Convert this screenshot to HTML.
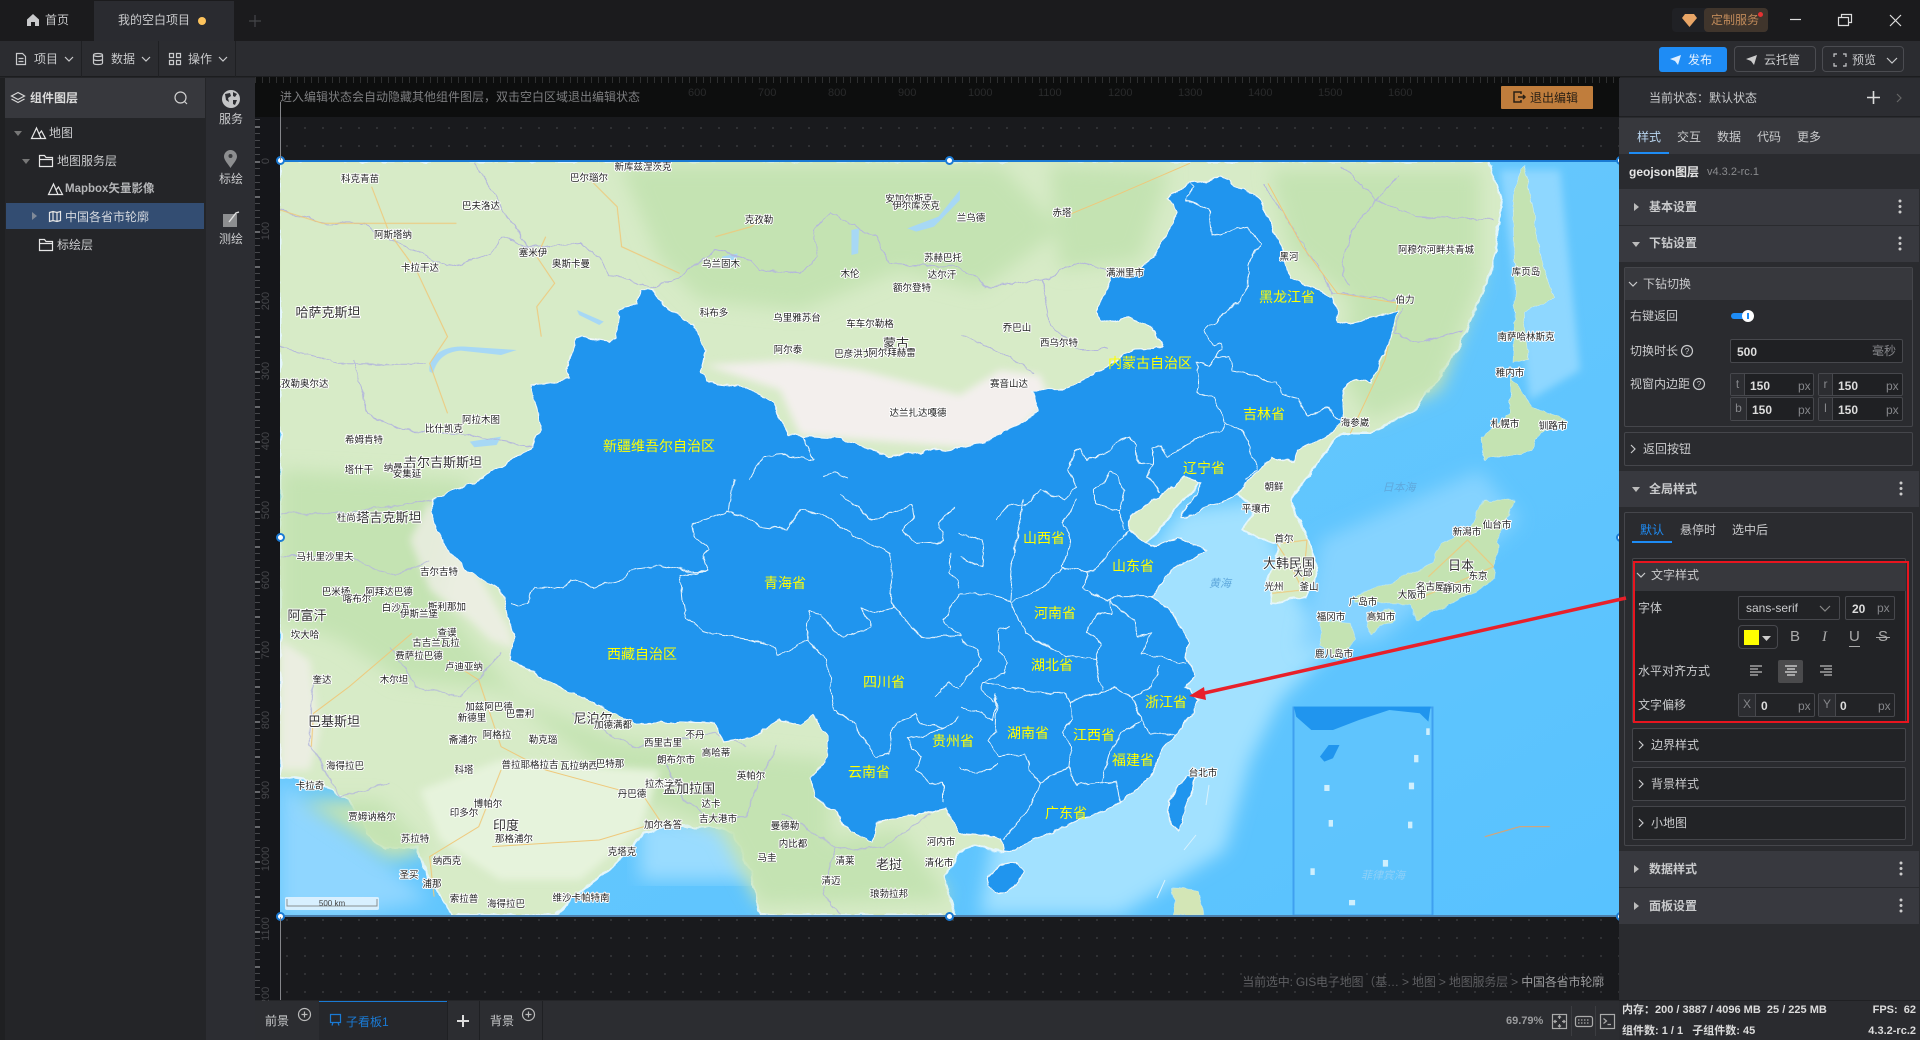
<!DOCTYPE html>
<html lang="zh"><head><meta charset="utf-8"><title>我的空白项目</title>
<style>
*{box-sizing:border-box}
html,body{margin:0;padding:0;width:1920px;height:1040px;overflow:hidden;background:#242528}
body{font:12px/16px "Liberation Sans","Noto Sans CJK SC",sans-serif;color:#c9cacc;position:relative}
.a{position:absolute}
.t{position:absolute;white-space:nowrap;height:16px;line-height:16px}
.b{font-weight:700}
.sec{position:absolute;left:1619px;width:300px;background:#38393f}
.box{position:absolute;border:1px solid #45464b;border-radius:2px}
.inp{position:absolute;background:#1f2023;border:1px solid #47484d;border-radius:2px}
.lbl{position:absolute;left:0;top:0;bottom:0;border-right:1px solid #47484d;background:#2c2d31;color:#85868a;text-align:center;line-height:21px}
.px{color:#85868a}
.m text{font-family:"Liberation Sans","Noto Sans CJK SC",sans-serif;font-size:9.5px;fill:#222;stroke:#fff;stroke-width:2px;paint-order:stroke;stroke-linejoin:round;text-anchor:middle}
.m text.l{font-size:13px;fill:#333}
.m text.w{fill:#5fa8dc;stroke:none;font-size:11px;font-style:italic}
.p polyline{fill:none;stroke:#e9f5fd;stroke-width:1;vector-effect:non-scaling-stroke;stroke-linejoin:round}
.c polyline{fill:none;stroke:#b4b7dc;stroke-width:1;vector-effect:non-scaling-stroke}
.r polyline{fill:none;stroke:#efc87a;stroke-width:1;vector-effect:non-scaling-stroke}
.y text{font-family:"Liberation Sans","Noto Sans CJK SC",sans-serif;font-size:14px;fill:#ffff00;text-anchor:middle;dominant-baseline:central}
.ic{position:absolute;overflow:visible;fill:none;stroke:#c9cacc;stroke-width:1.2}
.h{position:absolute;width:9px;height:9px;border-radius:50%;background:#fff;border:2px solid #1a7ad4}
.rn{position:absolute;color:#2a2b2c;font-size:11px;line-height:12px}
.ry{position:absolute;color:#45464a;font-size:11px;line-height:12px;transform:rotate(-90deg);transform-origin:center;width:30px;text-align:center;left:251px}
</style></head><body>

<!-- top bar -->
<div class="a" style="left:0;top:0;width:1920px;height:41px;background:#1b1b1d"></div>
<div class="a" style="left:94px;top:1px;width:140px;height:40px;background:#2a2b30"></div>
<svg class="ic" style="left:26px;top:13px" width="14" height="14" viewBox="0 0 14 14"><path d="M7 1L1 6.5V13H5V9H9V13H13V6.5Z" fill="#c9cacc" stroke="none"/></svg>
<span class="t" style="left:45px;top:12px">首页</span>
<span class="t" style="left:118px;top:12px">我的空白项目</span>
<div class="a" style="left:198px;top:17px;width:8px;height:8px;border-radius:50%;background:#fdc35c"></div>
<svg class="ic" style="left:249px;top:15px;stroke:#45464a" width="12" height="12"><path d="M6 0V12M0 6H12"/></svg>
<div class="a" style="left:1672px;top:8px;width:96px;height:24px;border-radius:4px;background:#202125"></div>
<div class="a" style="left:1704px;top:8px;width:64px;height:24px;border-radius:4px;background:#40352c"></div>
<svg class="ic" style="left:1682px;top:14px" width="15" height="13" viewBox="0 0 15 13"><path d="M3 0H12L15 4L7.5 13L0 4Z" fill="#e8a566" stroke="none"/></svg>
<span class="t" style="left:1711px;top:12px;color:#c08a5a">定制服务</span>
<div class="a" style="left:1758px;top:12px;width:5px;height:5px;border-radius:50%;background:#e53232"></div>
<svg class="ic" style="left:1790px;top:19px;stroke:#ddd" width="11" height="2"><path d="M0 .5H11"/></svg>
<svg class="ic" style="left:1838px;top:14px;stroke:#ddd" width="14" height="12"><path d="M.5 3.5H10.5V11.5H.5ZM3.5 3.5V.5H13.5V8.5H10.5"/></svg>
<svg class="ic" style="left:1890px;top:15px;stroke:#ddd" width="11" height="11"><path d="M0 0L11 11M11 0L0 11"/></svg>

<!-- toolbar -->
<div class="a" style="left:0;top:41px;width:1920px;height:36px;background:#2b2c30;border-bottom:1px solid #1c1d1f"></div>
<div class="a" style="left:81px;top:41px;width:1px;height:36px;background:#1f2023"></div>
<div class="a" style="left:158px;top:41px;width:1px;height:36px;background:#1f2023"></div>
<div class="a" style="left:235px;top:41px;width:1px;height:36px;background:#1f2023"></div>
<svg class="ic" style="left:16px;top:53px" width="10" height="12"><path d="M.5.5H6.5L9.5 3.5V11.5H.5ZM2.5 5.5H7.5M2.5 8.5H7.5"/></svg>
<span class="t" style="left:34px;top:51px">项目</span>
<svg class="ic" style="left:65px;top:57px" width="8" height="5"><path d="M0 0L4 4L8 0"/></svg>
<svg class="ic" style="left:93px;top:53px" width="10" height="12"><ellipse cx="5" cy="2" rx="4.5" ry="1.5"/><path d="M.5 2V10C.5 12 9.5 12 9.5 10V2M.5 6C.5 8 9.5 8 9.5 6"/></svg>
<span class="t" style="left:111px;top:51px">数据</span>
<svg class="ic" style="left:142px;top:57px" width="8" height="5"><path d="M0 0L4 4L8 0"/></svg>
<svg class="ic" style="left:169px;top:53px" width="12" height="12"><path d="M.5.5H4.5V4.5H.5ZM7.5.5H11.5V4.5H7.5ZM.5 7.5H4.5V11.5H.5ZM7.5 7.5H11.5V11.5H7.5Z"/></svg>
<span class="t" style="left:188px;top:51px">操作</span>
<svg class="ic" style="left:219px;top:57px" width="8" height="5"><path d="M0 0L4 4L8 0"/></svg>
<div class="a" style="left:1659px;top:47px;width:68px;height:25px;background:#1e8cf5;border-radius:3px"></div>
<svg class="ic" style="left:1670px;top:55px" width="11" height="10"><path d="M0 4L11 0L8 10L5 6Z" fill="#ddeeff" stroke="none"/></svg>
<span class="t" style="left:1688px;top:52px;color:#e4f1ff">发布</span>
<div class="a" style="left:1734px;top:46px;width:82px;height:26px;border:1px solid #4b4c51;border-radius:4px"></div>
<svg class="ic" style="left:1746px;top:55px" width="11" height="10"><path d="M0 4L11 0L8 10L5 6Z" fill="#ccc" stroke="none"/></svg>
<span class="t" style="left:1764px;top:52px">云托管</span>
<div class="a" style="left:1822px;top:46px;width:82px;height:26px;border:1px solid #4b4c51;border-radius:4px"></div>
<svg class="ic" style="left:1834px;top:54px" width="12" height="12"><path d="M0 3V0H3M9 0H12V3M12 9V12H9M3 12H0V9"/></svg>
<span class="t" style="left:1852px;top:52px">预览</span>
<svg class="ic" style="left:1887px;top:58px" width="10" height="6"><path d="M0 0L5 5L10 0"/></svg>

<!-- left panel -->
<div class="a" style="left:0;top:78px;width:206px;height:962px;background:#242528"></div>
<div class="a" style="left:0;top:78px;width:5px;height:962px;background:#1f2022"></div>
<div class="a" style="left:5px;top:78px;width:200px;height:40px;background:#37383d"></div>
<svg class="ic" style="left:11px;top:92px;stroke:#d8d8d8" width="14" height="12"><path d="M7 .5L13.5 4L7 7.5L.5 4ZM.5 7L7 10.5L13.5 7"/></svg>
<span class="t b" style="left:30px;top:90px;color:#dcdcdc">组件图层</span>
<svg class="ic" style="left:174px;top:91px;stroke:#d0d0d0" width="14" height="14"><circle cx="6.5" cy="6.5" r="5.5"/><path d="M10.5 10.5L13 13"/></svg>
<svg class="ic" style="left:14px;top:131px" width="8" height="5"><path d="M0 0H8L4 5Z" fill="#777" stroke="none"/></svg>
<svg class="ic" style="left:31px;top:127px;stroke:#e6e6e6" width="15" height="12"><path d="M.5 11.5L5.5 1L10 11.5ZM8 7L10.5 4L14.5 11.5H10"/></svg>
<span class="t" style="left:49px;top:125px">地图</span>
<svg class="ic" style="left:22px;top:159px" width="8" height="5"><path d="M0 0H8L4 5Z" fill="#777" stroke="none"/></svg>
<svg class="ic" style="left:39px;top:155px;stroke:#e6e6e6" width="14" height="12"><path d="M.5 11.5V.5H5.5L7 2.5H13.5V11.5ZM.5 4.5H13.5"/></svg>
<span class="t" style="left:57px;top:153px">地图服务层</span>
<svg class="ic" style="left:48px;top:183px;stroke:#e6e6e6" width="15" height="12"><path d="M.5 11.5L5.5 1L10 11.5ZM8 7L10.5 4L14.5 11.5H10"/></svg>
<span class="t b" style="left:65px;top:181px;font-size:11.5px;color:#b5b6b8">Mapbox矢量影像</span>
<div class="a" style="left:6px;top:203px;width:198px;height:26px;background:#334d72"></div>
<svg class="ic" style="left:32px;top:212px" width="5" height="8"><path d="M0 0V8L5 4Z" fill="#808a99" stroke="none"/></svg>
<svg class="ic" style="left:49px;top:211px;stroke:#e6e6e6" width="12" height="11"><path d="M.5 1.5L4 .5L8 1.5L11.5 .5V9.5L8 10.5L4 9.5L.5 10.5ZM4 .5V9.5M8 1.5V10.5"/></svg>
<span class="t" style="left:65px;top:209px;color:#d4d8de">中国各省市轮廓</span>
<svg class="ic" style="left:39px;top:239px;stroke:#e6e6e6" width="14" height="12"><path d="M.5 11.5V.5H5.5L7 2.5H13.5V11.5ZM.5 4.5H13.5"/></svg>
<span class="t" style="left:57px;top:237px">标绘层</span>

<!-- tool strip -->
<div class="a" style="left:206px;top:78px;width:49px;height:922px;background:#2c2d32"></div>
<div class="a" style="left:206px;top:1000px;width:49px;height:40px;background:#2c2d32"></div>
<svg class="ic" style="left:222px;top:90px" width="18" height="18" viewBox="0 0 18 18"><circle cx="9" cy="9" r="9" fill="#c4c5c7" stroke="none"/><path d="M3 4L8 3L9 6L6 8L7 12L4 10ZM11 2L15 4L13 7L11 6ZM11 10L15 10L13 15L11 14Z" fill="#2c2d32" stroke="none"/></svg>
<span class="t" style="left:219px;top:111px">服务</span>
<svg class="ic" style="left:224px;top:150px" width="13" height="18" viewBox="0 0 13 18"><path d="M6.5 0C3 0 0 3 0 6.5C0 10 4 14 6.5 18C9 14 13 10 13 6.5C13 3 10 0 6.5 0Z" fill="#8d8e90" stroke="none"/><circle cx="6.5" cy="6" r="2" fill="#3a3b3e" stroke="none"/></svg>
<span class="t" style="left:219px;top:171px">标绘</span>
<svg class="ic" style="left:223px;top:211px" width="17" height="17" viewBox="0 0 17 17"><rect x="0" y="3" width="14" height="13" fill="#8d8e90" stroke="none"/><path d="M6 11L13 2L16 1" stroke="#e0e0e0" stroke-width="1.4"/></svg>
<span class="t" style="left:219px;top:231px">测绘</span>

<!-- canvas -->
<div class="a" style="left:255px;top:77px;width:1365px;height:923px;background-color:#191a1d;background-image:radial-gradient(circle at 9px 9px,#36373a 0.8px,transparent 1.1px);background-size:18px 18px;background-position:275px 6px"></div>
<div class="a" style="left:255px;top:77px;width:25px;height:923px;background-color:#15161a;background-image:repeating-linear-gradient(to bottom,#47484c 0,#47484c 1px,transparent 1px,transparent 7px)"></div>
<div class="a" style="left:255px;top:77px;width:5px;height:923px;background:repeating-linear-gradient(to bottom,#66676b 0,#66676b 2px,transparent 2px,transparent 35px);background-position:0 14px"></div>
<div class="a" style="left:260px;top:77px;width:20px;height:923px;background:#15161a"></div>
<div class="ry" style="top:155px">0</div><div class="ry" style="top:225px">100</div><div class="ry" style="top:295px">200</div><div class="ry" style="top:365px">300</div><div class="ry" style="top:435px">400</div><div class="ry" style="top:504px">500</div><div class="ry" style="top:574px">600</div><div class="ry" style="top:644px">700</div><div class="ry" style="top:714px">800</div><div class="ry" style="top:784px">900</div><div class="ry" style="top:853px">1000</div><div class="ry" style="top:923px">1100</div><div class="ry" style="top:993px">1200</div>

<!-- MAP -->
<svg class="a" style="left:280px;top:161px" width="1340" height="755" viewBox="280 161 1340 755">
<defs>
<linearGradient id="oc" x1="0" y1="0" x2="1" y2="1"><stop offset="0" stop-color="#6fcbfb"/><stop offset="1" stop-color="#58c2ff"/></linearGradient>
<filter id="bl"><feGaussianBlur stdDeviation="9"/></filter>
<filter id="bl2"><feGaussianBlur stdDeviation="4"/></filter>
<filter id="rough" filterUnits="userSpaceOnUse" x="280" y="161" width="1340" height="755" color-interpolation-filters="sRGB"><feTurbulence type="fractalNoise" baseFrequency="0.07" numOctaves="3" seed="4" result="n"/><feDisplacementMap in="SourceGraphic" in2="n" scale="7" xChannelSelector="R" yChannelSelector="G"/></filter>
</defs>
<rect x="280" y="161" width="1340" height="755" fill="url(#oc)"/>
<!-- shelves -->
<polygon filter="url(#bl)" fill="#a2e1ff" points="1180,510 1260,500 1300,600 1340,640 1280,700 1250,760 1225,850 1120,915 980,915 1000,800 1120,600"/>
<polygon filter="url(#bl)" fill="#9adcff" points="640,820 770,820 770,880 640,880"/>
<polygon filter="url(#bl)" fill="#8fd6ff" points="280,780 370,850 430,900 360,915 280,915"/>
<polygon filter="url(#bl)" fill="#85d3ff" points="1320,540 1480,470 1520,520 1380,640 1300,650"/>
<polygon filter="url(#bl2)" fill="#8ed7ff" points="1500,170 1560,170 1580,370 1530,400"/>
<!-- land -->
<g filter="url(#rough)">
<polygon fill="#d7ebc7" stroke="#e3f6fc" stroke-width="2" points="280,161 1487,161 1502,200 1493,267 1459,347 1415,410 1372,433 1344,433 1337,437 1290,500 1303,530 1318,567 1307,597 1272,603 1268,580 1281,543 1272,543 1242,530 1255,510 1237,493 1200,480 1100,600 1100,750 1050,830 1003,853 975,845 960,850 945,875 955,915 760,915 751,873 733,833 715,827 662,827 644,833 617,863 572,897 555,915 452,915 430,880 416,847 385,850 367,833 349,800 318,783 280,777"/>
</g>
<!-- greener zones -->
<g filter="url(#bl)" fill="#c4e3b2">
<polygon points="620,165 1000,165 1060,230 980,290 900,270 800,310 700,300 660,260"/>
<polygon points="1270,170 1480,170 1480,280 1440,390 1370,420 1345,380 1350,300 1290,250"/>
<polygon points="1050,165 1170,170 1140,260 1060,270"/>
<polygon points="280,470 470,480 440,600 520,700 620,740 720,750 830,760 830,840 900,830 950,900 760,905 720,830 640,800 500,690 400,680 340,640 280,620"/>
<polygon points="300,800 380,800 430,850 390,860"/>
</g>
<g filter="url(#bl2)" fill="#f3efed">
<polygon points="705,365 780,390 800,435 1000,450 1050,400 1040,375 1000,370 960,395 860,370 790,360"/>
<polygon opacity=".7" points="430,500 470,560 510,630 515,650 490,640 470,620 430,590 410,540"/>
<polygon opacity=".7" points="280,640 310,660 320,730 310,770 280,770"/>
</g>
<g filter="url(#bl2)" fill="#e6f3dc">
<polygon points="500,760 660,770 640,830 580,880 500,880 440,840 420,790"/>
</g>
<!-- islands -->
<g fill="#c4e3b2" stroke="#dff4fb" stroke-width="1" filter="url(#rough)">
<g transform="translate(960,100) scale(.4337,.3333)">
<polygon points="1300,190 1340,480 1370,590 1300,640 1310,780 1275,790 1280,600 1275,300"/>
<polygon points="1270,830 1320,920 1400,960 1340,1000 1320,1050 1210,1080 1200,1010 1270,940"/>
</g>
<g transform="translate(960,500) scale(.4337,.3333)">
<polygon points="1210,0 1280,0 1240,120 1230,240 1195,270 1050,360 1040,310 910,310 910,290 1010,240 1090,190 1110,130 1170,90"/>
<polygon points="830,360 900,370 910,420 870,480 830,440"/>
<polygon points="940,345 1000,330 1000,360 945,400"/>
<polygon fill="#d3e6b6" points="490,1165 550,1170 560,1245 495,1245"/>
</g>
</g>
<!-- korea roads / japan -->
<g class="r" transform="translate(960,500) scale(.4337,.3333)">
<polyline points="730,130 760,190 790,270"/><polyline points="740,130 800,120 790,270 720,280"/><polyline points="1080,230 1170,120 1230,200 1050,300"/>
<polyline points="1210,1010 1290,980 1360,980" style="stroke:#e9a060"/>
</g>
<!-- water -->
<g fill="#a7d8f5">
<g transform="translate(260,80) scale(.4464,.3333)">
<path d="M380 875C375 830 410 795 460 800L575 810L540 825L450 812C415 815 395 840 388 880Z"/>
<polygon points="470,1085 540,1070 530,1095 480,1102"/>
<polygon points="1450,445 1520,410 1568,330 1568,360 1510,440 1470,455"/>
<polygon points="1325,450 1342,445 1340,520 1325,525"/>
<polygon points="710,690 770,725 760,735 715,705"/>
<polygon points="1035,530 1070,520 1065,550 1040,550"/>
</g>
</g>
<!-- country borders -->
<g filter="url(#rough)">
<g class="c" transform="translate(260,80) scale(.4464,.3333)">
<polyline points="45,390 140,430 230,430 280,470 330,500 420,560 520,520 540,470 600,500 650,500 720,490 760,530 780,590 830,600 880,625"/>
<polyline points="880,625 940,590 1020,510 1100,540 1120,570 1210,580 1250,530 1240,450 1280,400 1380,470 1410,550 1568,560"/>
<polyline points="480,250 600,500"/>
<polyline points="45,800 180,850 370,850"/>
<polyline points="210,840 240,1000 320,1050 450,1060 610,1100"/>
</g>
<g class="c" transform="translate(260,480) scale(.4464,.3333)">
<polyline points="45,100 200,100 385,60"/><polyline points="45,230 200,230 300,290 380,240"/>
<polyline points="120,600 110,790 180,950 290,910"/><polyline points="290,500 350,620 450,650 540,520"/>
<polyline points="700,700 840,800 1020,760 1090,800"/><polyline points="900,830 950,960 1010,1010"/><polyline points="1000,1010 1090,1010 1120,900 1160,800"/>
<polyline points="1170,1000 1300,1110 1400,1100 1500,1000"/><polyline points="1290,1100 1260,1240 1300,1300"/>
</g>
<g class="c" transform="translate(960,100) scale(.4337,.3333)">
<polyline points="0,500 60,560 190,540 270,490 345,510"/><polyline points="190,540 210,680 280,750 340,750"/>
<polyline points="0,700 100,760 170,820"/><polyline points="700,250 790,430 860,580 1000,600"/>
<polyline points="1020,620 1000,700 1060,730 1160,690"/><polyline points="880,200 960,300 900,400 880,500 900,560"/><polyline points="1010,230 960,300 1050,350 1230,360"/>
</g>
</g>
<g class="r" transform="translate(260,80) scale(.4464,.3333)">
<polyline points="250,320 290,460 350,570 420,770 380,850 420,1000" /><polyline points="45,390 140,430 280,430 440,430"/><polyline points="640,470 620,530 660,610 620,680 630,770"/><polyline points="1020,470 1100,440 1120,420"/><polyline points="740,300 800,380 810,500 940,580"/>
</g>
<g class="r" transform="translate(260,480) scale(.4464,.3333)">
<polyline points="115,800 120,700 200,620 340,460"/><polyline points="420,540 490,600 510,680 540,800 640,870 860,950 900,1030"/><polyline points="540,870 490,1040 380,1130 390,1250"/><polyline points="520,1100 760,1080 860,1040"/>
</g>
<g class="r" transform="translate(960,100) scale(.4337,.3333)">
<polyline points="240,350 370,280 530,190"/><polyline points="710,250 790,440 870,580 1010,610 980,780 900,1000"/>
</g>

<!-- China -->
<g filter="url(#rough)">
<g fill="#2095ee" stroke="#eef7fb" stroke-width="1.2" stroke-linejoin="round">
<polygon points="639,290 653,290 664,307 693,323 706,350 700,373 706,382 747,388 773,403 789,435 840,438 889,457 960,447 986,442 1038,412 1032,390 1064,390 1107,367 1133,348 1164,347 1151,327 1131,317 1099,322 1097,313 1112,270 1129,278 1155,257 1177,213 1168,198 1190,183 1220,178 1259,197 1281,247 1290,277 1333,297 1339,320 1350,323 1376,317 1398,310 1389,343 1372,383 1355,378 1342,390 1344,420 1333,432 1320,440 1298,450 1294,462 1272,457 1233,497 1185,517 1181,517 1201,483 1185,475 1160,497 1129,517 1129,530 1151,547 1177,538 1207,550 1172,570 1164,577 1153,597 1172,613 1190,643 1185,657 1194,677 1185,687 1199,700 1190,717 1164,747 1151,777 1120,802 1090,817 1047,833 1014,850 1003,853 1001,838 960,833 945,808 916,815 876,823 872,842 849,833 836,813 814,795 811,777 827,757 827,737 813,715 800,725 778,720 751,737 724,742 715,723 680,722 635,725 595,703 546,680 510,660 514,637 499,587 470,573 447,550 432,520 432,500 474,482 479,478 532,447 541,427 532,385 570,380 566,370 577,337 608,342 617,337 619,310 637,303"/>
<polygon points="986,877 1000,866 1016,862 1023,870 1018,882 1008,892 995,892 988,887"/>
<polygon points="1190,775 1196,777 1193,790 1185,807 1180,830 1172,825 1168,813 1170,800 1178,785"/>
</g>
<!-- province borders -->
<g class="p" transform="translate(260,80) scale(.4464,.3333)">
<polyline points="1215,1065 1240,1140 1175,1125 1130,1130 1095,1195"/><polyline points="1265,1190 1285,1180 1320,1195"/>
</g>
<g class="p" transform="translate(260,480) scale(.4464,.3333)">
<polyline points="565,375 600,370 615,320 680,325 695,300 750,320 820,295 830,270 900,255 960,275 1000,275 990,230 1005,210 975,170 965,135 1045,95 1090,110 1120,140 1180,150 1210,90 1270,110 1330,170 1410,220 1420,280 1410,340 1420,380 1480,470 1568,470"/>
<polyline points="1060,0 1050,95"/><polyline points="1000,275 940,285 950,400 990,450 1050,470 1100,480 1150,500 1160,525 1225,480"/>
<polyline points="1300,45 1340,80 1370,120 1460,75 1465,110 1440,150 1470,190 1530,185 1520,130 1560,80"/>
<polyline points="1230,395 1225,480 1270,540 1285,670 1290,690 1330,730 1380,830 1410,820 1420,740 1470,700 1480,730 1530,745 1568,710"/>
<polyline points="1230,395 1260,400 1280,450 1310,470 1370,440 1345,380 1380,400 1420,380"/>
<polyline points="1445,780 1480,830 1470,870 1500,910 1530,910 1530,970"/><polyline points="1445,780 1500,760 1530,745"/>
<polyline points="1510,650 1540,610 1568,630"/><polyline points="1550,220 1545,280 1568,320"/>
<polyline points="1568,340 1530,420 1568,470"/>
</g>
<g class="p" transform="translate(960,100) scale(.4337,.3333)">
<polyline points="530,250 540,265 520,300 575,330 580,400 600,405 660,380 695,430 665,500 665,560 640,610 630,615 565,690 585,740 600,730 605,745 590,770 620,770 625,810 680,825 730,850 740,880 780,895 800,950 850,925 860,945 885,960"/>
<polyline points="590,770 570,800 540,790 550,820 550,880 590,895 605,960 610,965 650,990 670,1050 685,1110 660,1140"/>
<polyline points="610,965 600,995 540,1020 480,1070 470,1040 445,1040 445,1095 410,1090 405,1040 390,1015 360,1030 340,1060 290,1080 280,1045 265,1055 250,1110 270,1160 240,1200 185,1170 150,1220 110,1215 85,1260"/>
<polyline points="445,1095 430,1130 465,1175"/><polyline points="350,1115 310,1175 310,1210 370,1230 380,1170 350,1115"/><polyline points="370,1230 380,1290"/>
</g>
<g class="p" transform="translate(960,500) scale(.4337,.3333)">
<polyline points="150,0 130,100 120,210 115,300 150,400 190,430 245,465 310,480"/><polyline points="270,0 240,70 255,130 235,200 290,215 310,210 390,90"/>
<polyline points="120,305 190,265 240,200"/><polyline points="290,215 285,265 340,300 360,290 445,290"/>
<polyline points="345,300 350,345 315,340 290,400 325,430 310,480 330,570"/><polyline points="345,300 400,360 410,410 440,400 420,460 520,490"/>
<polyline points="0,95 50,120 55,200 0,170"/><polyline points="0,280 60,280 115,300"/><polyline points="115,380 90,385 90,450 110,490 100,520 50,545 50,570 80,610"/>
<polyline points="0,420 40,450 50,480 0,560"/>
<polyline points="50,545 125,565 210,580 240,580 255,605 335,575 355,560 400,595"/>
<polyline points="460,500 440,560 400,595 420,660 440,700 495,700"/><polyline points="420,660 370,700 345,760 325,845 270,855 250,800 210,830 185,850"/>
<polyline points="255,605 260,660 240,700 255,740 250,800"/><polyline points="85,585 80,700 65,720 90,770 150,760 160,810 185,850 160,920 120,990 100,1015"/>
<polyline points="325,845 360,850 370,905"/><polyline points="85,790 40,825 0,800"/><polyline points="0,620 50,640 75,660 85,590"/>
</g>
</g>
<!-- labels -->
<g class="m">
<text x="360" y="182">科克青苗</text><text x="481" y="209">巴夫洛达</text><text x="589" y="181">巴尔瑙尔</text><text x="643" y="170">新库兹涅茨克</text><text x="759" y="223">克孜勒</text><text x="909" y="202">安加尔斯克</text><text x="916" y="209">伊尔库茨克</text><text x="393" y="238">阿斯塔纳</text><text x="420" y="271">卡拉干达</text><text x="533" y="256">塞米伊</text><text x="571" y="267">奥斯卡曼</text><text x="721" y="267">乌兰固木</text><text x="943" y="261">苏赫巴托</text><text x="942" y="278">达尔汗</text><text x="850" y="277">木伦</text><text x="912" y="291">额尔登特</text><text class="l" x="328" y="317">哈萨克斯坦</text><text x="714" y="316">科布多</text><text x="797" y="321">乌里雅苏台</text><text x="870" y="327">车车尔勒格</text><text x="788" y="353">阿尔泰</text><text x="858" y="357">巴彦洪戈尔</text><text class="l" x="896" y="348">蒙古</text><text x="892" y="356">阿尔拜赫雷</text><text x="918" y="416">达兰扎达嘎德</text><text x="300" y="387">克孜勒奥尔达</text><text x="481" y="423">阿拉木图</text><text x="444" y="432">比什凯克</text><text class="l" x="443" y="467">吉尔吉斯斯坦</text><text x="364" y="443">希姆肯特</text><text x="359" y="473">塔什干</text><text x="398" y="471">纳曼干</text><text x="407" y="477">安集延</text>
<text x="351" y="521">杜尚别</text><text class="l" x="389" y="522">塔吉克斯坦</text><text x="325" y="560">马扎里沙里夫</text><text x="439" y="575">吉尔吉特</text><text x="336" y="595">巴米扬</text><text x="389" y="595">阿拜达巴德</text><text x="357" y="602">喀布尔</text><text x="396" y="611">白沙瓦</text><text x="447" y="610">斯利那加</text><text x="419" y="617">伊斯兰堡</text><text class="l" x="307" y="620">阿富汗</text><text x="305" y="638">坎大哈</text><text x="447" y="636">查谟</text><text x="436" y="646">古吉兰瓦拉</text><text x="419" y="659">费萨拉巴德</text><text x="464" y="670">卢迪亚纳</text><text x="394" y="683">木尔坦</text><text x="322" y="683">奎达</text><text class="l" x="334" y="726">巴基斯坦</text><text x="489" y="710">加兹阿巴德</text><text x="472" y="721">新德里</text><text x="520" y="717">巴雷利</text><text class="l" x="593" y="723">尼泊尔</text><text x="613" y="728">加德满都</text><text x="695" y="738">不丹</text><text x="463" y="743">斋浦尔</text><text x="497" y="738">阿格拉</text><text x="543" y="743">勒克瑙</text><text x="663" y="746">西里古里</text><text x="716" y="756">高哈蒂</text><text x="676" y="763">朗布尔市</text><text x="464" y="773">科塔</text><text x="345" y="769">海得拉巴</text><text x="530" y="768">普拉耶格拉吉</text><text x="579" y="769">瓦拉纳西</text><text x="610" y="767">巴特那</text><text x="310" y="789">卡拉奇</text><text x="664" y="787">拉杰沙希</text><text class="l" x="689" y="793">孟加拉国</text><text x="632" y="797">丹巴德</text><text x="711" y="807">达卡</text><text x="751" y="779">英帕尔</text><text x="464" y="816">印多尔</text><text x="488" y="807">博帕尔</text><text x="372" y="820">贾姆讷格尔</text><text class="l" x="506" y="830">印度</text><text x="663" y="828">加尔各答</text><text x="718" y="822">吉大港市</text><text x="785" y="829">曼德勒</text><text x="514" y="842">那格浦尔</text><text x="415" y="842">苏拉特</text><text x="793" y="847">内比都</text><text class="l" x="889" y="869">老挝</text><text x="941" y="845">河内市</text><text x="939" y="866">清化市</text><text x="767" y="861">马圭</text><text x="831" y="884">清迈</text><text x="889" y="897">琅勃拉邦</text><text x="447" y="864">纳西克</text><text x="409" y="878">圣买</text><text x="432" y="887">浦那</text><text x="464" y="902">索拉普</text><text x="506" y="907">海得拉巴</text><text x="581" y="901">维沙卡帕特南</text><text x="622" y="855">克塔克</text><text x="845" y="864">清莱</text>
<text x="1062" y="216">赤塔</text><text x="971" y="221">兰乌德</text><text x="1125" y="276">满洲里市</text><text x="1289" y="260">黑河</text><text x="1436" y="253">阿穆尔河畔共青城</text><text x="1526" y="275">库页岛</text><text x="1405" y="303">伯力</text><text x="1526" y="340">南萨哈林斯克</text><text x="1017" y="331">乔巴山</text><text x="1059" y="346">西乌尔特</text><text x="1009" y="387">赛音山达</text><text x="1510" y="376">稚内市</text><text x="1505" y="427">札幌市</text><text x="1553" y="429">钏路市</text><text x="1355" y="426">海参崴</text><text x="1274" y="490">朝鲜</text><text x="1256" y="512">平壤市</text><text class="w" x="1399" y="491">日本海</text>
<text x="1284" y="542">首尔</text><text class="l" x="1289" y="568">大韩民国</text><text x="1303" y="576">大邱</text><text x="1274" y="590">光州</text><text x="1309" y="590">釜山</text><text x="1497" y="528">仙台市</text><text x="1467" y="535">新潟市</text><text class="l" x="1461" y="570">日本</text><text x="1478" y="579">东京</text><text x="1435" y="590">名古屋市</text><text x="1457" y="592">静冈市</text><text x="1412" y="598">大阪市</text><text x="1363" y="605">广岛市</text><text x="1331" y="620">福冈市</text><text x="1381" y="620">高知市</text><text x="1334" y="657">鹿儿岛市</text><text x="1203" y="776">台北市</text><text class="w" x="1220" y="587">黄海</text>
</g>
<!-- inset -->
<g>
<rect x="1293.5" y="707.5" width="139" height="208" fill="#60c4fb" fill-opacity=".6" stroke="#3fa0f0" stroke-width="2"/>
<g transform="translate(960,500) scale(.4337,.3333)" fill="#2095ee">
<polygon points="770,620 1085,620 1080,665 1060,640 990,630 920,660 860,690 810,690 775,650"/>
<polygon points="830,770 850,735 875,735 860,775 840,785"/>
<g fill="#cfeffd"><rect x="1047" y="765" width="10" height="22"/><rect x="1035" y="848" width="12" height="20"/><rect x="840" y="855" width="12" height="18"/><rect x="850" y="960" width="10" height="20"/><rect x="1033" y="965" width="10" height="20"/><rect x="975" y="1080" width="12" height="20"/><rect x="808" y="1105" width="10" height="20"/><rect x="897" y="1200" width="14" height="16"/><rect x="1075" y="685" width="8" height="20"/></g>
</g>
<text x="1383" y="879" style="font:italic 11px 'Liberation Sans','Noto Sans CJK SC',sans-serif;fill:#8fd0f8;text-anchor:middle">菲律宾海</text>
<g stroke="#d9f2fd" stroke-width="1"><line x1="1209" y1="785" x2="1206" y2="805"/><line x1="1184" y1="850" x2="1196" y2="835"/><line x1="1157" y1="898" x2="1165" y2="880"/></g>
</g>
<g class="y">
<text x="659" y="446">新疆维吾尔自治区</text><text x="642" y="654">西藏自治区</text><text x="785" y="583">青海省</text><text x="884" y="682">四川省</text><text x="869" y="772">云南省</text><text x="953" y="741">贵州省</text><text x="1287" y="297">黑龙江省</text><text x="1150" y="363">内蒙古自治区</text><text x="1264" y="414">吉林省</text><text x="1204" y="468">辽宁省</text><text x="1044" y="538">山西省</text><text x="1133" y="566">山东省</text><text x="1055" y="613">河南省</text><text x="1052" y="665">湖北省</text><text x="1166" y="702">浙江省</text><text x="1028" y="733">湖南省</text><text x="1094" y="735">江西省</text><text x="1133" y="760">福建省</text><text x="1066" y="813">广东省</text>
</g>
<!-- scale -->
<rect x="285.5" y="897.5" width="93" height="12" rx="1" fill="#e0f3ff" fill-opacity=".9" stroke="#fff" stroke-opacity=".5"/>
<path d="M287 899V906H377V899" fill="none" stroke="#8a8f92" stroke-width="1"/>
<text x="332" y="906" style="font:8px 'Liberation Sans',sans-serif;fill:#444;text-anchor:middle">500 km</text>
</svg>

<!-- selection -->
<div class="a" style="left:280px;top:160px;width:1340px;height:2px;background:#1a7ad4"></div>
<div class="a" style="left:280px;top:915px;width:1340px;height:2px;background:#4c80ad"></div>
<div class="h" style="left:945px;top:156px"></div><div class="h" style="left:276px;top:156px"></div><div class="h" style="left:1616px;top:156px"></div><div class="h" style="left:276px;top:533px"></div><div class="h" style="left:1616px;top:533px"></div><div class="h" style="left:945px;top:912px"></div><div class="h" style="left:276px;top:912px"></div><div class="h" style="left:1616px;top:912px"></div>

<!-- banner -->
<div class="a" style="left:255px;top:77px;width:1365px;height:40px;background:#0d0e0e;background-image:repeating-linear-gradient(to right,#2e2f30 0,#2e2f30 1px,transparent 1px,transparent 7px);background-size:100% 6px;background-repeat:no-repeat"></div>
<div class="rn" style="left:688px;top:87px">600</div><div class="rn" style="left:758px;top:87px">700</div><div class="rn" style="left:828px;top:87px">800</div><div class="rn" style="left:898px;top:87px">900</div><div class="rn" style="left:968px;top:87px">1000</div><div class="rn" style="left:1038px;top:87px">1100</div><div class="rn" style="left:1108px;top:87px">1200</div><div class="rn" style="left:1178px;top:87px">1300</div><div class="rn" style="left:1248px;top:87px">1400</div><div class="rn" style="left:1318px;top:87px">1500</div><div class="rn" style="left:1388px;top:87px">1600</div>
<span class="t" style="left:280px;top:89px;color:#7d7e80">进入编辑状态会自动隐藏其他组件图层，双击空白区域退出编辑状态</span>
<div class="a" style="left:280px;top:102px;width:1px;height:58px;background:#85868a"></div>
<div class="a" style="left:280px;top:917px;width:1px;height:83px;background:#85868a"></div>
<div class="a" style="left:1501px;top:86px;width:92px;height:23px;background:#c07d3c;border-radius:1px"></div>
<svg class="ic" style="left:1513px;top:91px;stroke:#2a2015;stroke-width:1.5" width="13" height="12"><path d="M8 3V1H1V11H8V9M5 6H12M10 4L12 6L10 8"/></svg>
<span class="t" style="left:1530px;top:90px;color:#2a2015">退出编辑</span>

<span class="t" style="right:316px;top:974px;color:#5e5f62;font-size:12px;letter-spacing:-.17px">当前选中: GIS电子地图（基… &gt; 地图 &gt; 地图服务层 &gt; <span style="color:#9a9b9d">中国各省市轮廓</span></span>

<!-- bottom bar -->
<div class="a" style="left:255px;top:1001px;width:1365px;height:39px;background:#2c2d31"></div>
<div class="a" style="left:319px;top:1001px;width:128px;height:39px;background:#26272b;border-top:1px solid #1a7ad4"></div>
<div class="a" style="left:479px;top:1001px;width:1px;height:39px;background:#1f2023"></div>
<div class="a" style="left:447px;top:1001px;width:1px;height:39px;background:#1f2023"></div>
<div class="a" style="left:542px;top:1001px;width:1px;height:39px;background:#1f2023"></div>
<span class="t" style="left:265px;top:1013px">前景</span>
<svg class="ic" style="left:298px;top:1008px;stroke:#bbb" width="13" height="13"><circle cx="6.5" cy="6.5" r="6"/><path d="M6.5 3.5V9.5M3.5 6.5H9.5"/></svg>
<svg class="ic" style="left:330px;top:1014px;stroke:#1a7ad4" width="11" height="12"><path d="M.5.5H10.5V8.5H.5ZM3 8.5L2 11.5M8 8.5L9 11.5"/></svg>
<span class="t" style="left:346px;top:1014px;color:#1a7ad4">子看板1</span>
<svg class="ic" style="left:457px;top:1015px;stroke:#ddd;stroke-width:2" width="12" height="12"><path d="M6 0V12M0 6H12"/></svg>
<span class="t" style="left:490px;top:1013px">背景</span>
<svg class="ic" style="left:522px;top:1008px;stroke:#bbb" width="13" height="13"><circle cx="6.5" cy="6.5" r="6"/><path d="M6.5 3.5V9.5M3.5 6.5H9.5"/></svg>
<span class="t b" style="left:1506px;top:1013px;font-size:11px;color:#9a9b9d">69.79%</span>
<svg class="ic" style="left:1552px;top:1014px;stroke:#aaa" width="15" height="15"><rect x=".5" y=".5" width="14" height="14"/><path d="M7.5 2V5M7.5 10V13M2 7.5H5M10 7.5H13M6 3.5L7.5 2L9 3.5M6 11.5L7.5 13L9 11.5M3.5 6L2 7.5L3.5 9M11.5 6L13 7.5L11.5 9"/></svg>
<div class="a" style="left:1571px;top:1006px;width:1px;height:30px;background:#3c3d41"></div>
<svg class="ic" style="left:1575px;top:1016px;stroke:#aaa" width="18" height="11"><rect x=".5" y=".5" width="17" height="10" rx="2"/><path d="M3 4H15M3 7H15" stroke-dasharray="1.5 1.5"/></svg>
<div class="a" style="left:1595px;top:1006px;width:1px;height:30px;background:#3c3d41"></div>
<svg class="ic" style="left:1600px;top:1014px;stroke:#aaa" width="15" height="15"><rect x=".5" y=".5" width="14" height="14"/><path d="M3.5 4.5L6.5 7L3.5 9.5M7.5 10.5H11"/></svg>

<!-- right panel -->
<div class="a" style="left:1619px;top:78px;width:301px;height:962px;background:#2a2b2f"></div>
<div class="a" style="left:1619px;top:78px;width:301px;height:39px;background:#2c2d32;border-bottom:1px solid #1f2023"></div>
<span class="t" style="left:1649px;top:90px">当前状态：默认状态</span>
<svg class="ic" style="left:1867px;top:91px;stroke:#ddd;stroke-width:1.6" width="13" height="13"><path d="M6.5 0V13M0 6.5H13"/></svg>
<svg class="ic" style="left:1897px;top:94px;stroke:#666" width="4" height="8"><path d="M0 0L4 4L0 8"/></svg>
<div class="a" style="left:1619px;top:118px;width:301px;height:36px;background:#37383d"></div>
<span class="t" style="left:1637px;top:129px;color:#b9d5ef">样式</span><span class="t" style="left:1677px;top:129px">交互</span><span class="t" style="left:1717px;top:129px">数据</span><span class="t" style="left:1757px;top:129px">代码</span><span class="t" style="left:1797px;top:129px">更多</span>
<div class="a" style="left:1629px;top:152px;width:40px;height:2px;background:#1e8cf5"></div>
<span class="t b" style="left:1629px;top:164px;color:#e6e6e6">geojson图层</span><span class="t" style="left:1707px;top:164px;font-size:11px;color:#8a8b8e">v4.3.2-rc.1</span>

<div class="sec" style="top:189px;height:36px"></div>
<svg class="ic" style="left:1634px;top:203px" width="5" height="8"><path d="M0 0V8L5 4Z" fill="#bbb" stroke="none"/></svg>
<span class="t b" style="left:1649px;top:199px">基本设置</span>
<div class="sec" style="top:226px;height:36px"></div>
<svg class="ic" style="left:1632px;top:242px" width="8" height="5"><path d="M0 0H8L4 5Z" fill="#bbb" stroke="none"/></svg>
<span class="t b" style="left:1649px;top:235px">下钻设置</span>
<svg class="a" style="left:1898px;top:199px" width="4" height="16"><circle cx="2" cy="2" r="1.5" fill="#ccc"/><circle cx="2" cy="7.5" r="1.5" fill="#ccc"/><circle cx="2" cy="13" r="1.5" fill="#ccc"/></svg>
<svg class="a" style="left:1898px;top:236px" width="4" height="16"><circle cx="2" cy="2" r="1.5" fill="#ccc"/><circle cx="2" cy="7.5" r="1.5" fill="#ccc"/><circle cx="2" cy="13" r="1.5" fill="#ccc"/></svg>

<div class="box" style="left:1624px;top:267px;width:289px;height:160px"></div>
<div class="a" style="left:1625px;top:268px;width:287px;height:32px;background:#37383d"></div>
<svg class="ic" style="left:1629px;top:282px" width="8" height="5"><path d="M0 0L4 4L8 0"/></svg>
<span class="t" style="left:1643px;top:276px">下钻切换</span>
<span class="t" style="left:1630px;top:308px">右键返回</span>
<div class="a" style="left:1731px;top:313px;width:18px;height:6px;border-radius:3px;background:#1e8cf5"></div>
<div class="a" style="left:1742px;top:310px;width:12px;height:12px;border-radius:50%;background:#fff"></div>
<div class="a" style="left:1747px;top:313px;width:2px;height:6px;background:#1e8cf5"></div>
<span class="t" style="left:1630px;top:343px">切换时长</span>
<svg class="ic" style="left:1681px;top:345px" width="12" height="12"><circle cx="6" cy="6" r="5.5"/><text x="6" y="9" font-size="8" fill="#c9cacc" stroke="none" text-anchor="middle">?</text></svg>
<div class="inp" style="left:1730px;top:339px;width:173px;height:24px"></div>
<span class="t b" style="left:1737px;top:344px;color:#ddd">500</span><span class="t px" style="left:1872px;top:343px">毫秒</span>
<span class="t" style="left:1630px;top:376px">视窗内边距</span>
<svg class="ic" style="left:1693px;top:378px" width="12" height="12"><circle cx="6" cy="6" r="5.5"/><text x="6" y="9" font-size="8" fill="#c9cacc" stroke="none" text-anchor="middle">?</text></svg>
<div class="inp" style="left:1730px;top:373px;width:84px;height:23px"><div class="lbl" style="width:14px">t</div></div>
<div class="inp" style="left:1818px;top:373px;width:85px;height:23px"><div class="lbl" style="width:14px">r</div></div>
<div class="inp" style="left:1730px;top:397px;width:84px;height:24px"><div class="lbl" style="width:16px">b</div></div>
<div class="inp" style="left:1818px;top:397px;width:85px;height:24px"><div class="lbl" style="width:14px">l</div></div>
<span class="t b" style="left:1750px;top:378px;color:#ddd">150</span><span class="t px" style="left:1798px;top:378px">px</span>
<span class="t b" style="left:1838px;top:378px;color:#ddd">150</span><span class="t px" style="left:1886px;top:378px">px</span>
<span class="t b" style="left:1752px;top:402px;color:#ddd">150</span><span class="t px" style="left:1798px;top:402px">px</span>
<span class="t b" style="left:1838px;top:402px;color:#ddd">150</span><span class="t px" style="left:1886px;top:402px">px</span>

<div class="box" style="left:1624px;top:432px;width:289px;height:34px"></div>
<svg class="ic" style="left:1631px;top:445px" width="5" height="8"><path d="M0 0L4 4L0 8"/></svg>
<span class="t" style="left:1643px;top:441px">返回按钮</span>

<div class="sec" style="top:471px;height:36px"></div>
<svg class="ic" style="left:1632px;top:487px" width="8" height="5"><path d="M0 0H8L4 5Z" fill="#bbb" stroke="none"/></svg>
<span class="t b" style="left:1649px;top:481px">全局样式</span>
<svg class="a" style="left:1899px;top:481px" width="4" height="16"><circle cx="2" cy="2" r="1.5" fill="#ccc"/><circle cx="2" cy="7.5" r="1.5" fill="#ccc"/><circle cx="2" cy="13" r="1.5" fill="#ccc"/></svg>

<div class="box" style="left:1624px;top:512px;width:289px;height:334px"></div>
<span class="t" style="left:1640px;top:522px;color:#1e8cf5">默认</span><span class="t" style="left:1680px;top:522px">悬停时</span><span class="t" style="left:1732px;top:522px">选中后</span>
<div class="a" style="left:1632px;top:541px;width:40px;height:2px;background:#1e8cf5"></div>
<div class="box" style="left:1632px;top:558px;width:274px;height:165px;background:#222326"></div>
<div class="a" style="left:1633px;top:562px;width:273px;height:29px;background:#37383d"></div>
<svg class="ic" style="left:1637px;top:573px" width="8" height="5"><path d="M0 0L4 4L8 0"/></svg>
<span class="t" style="left:1651px;top:567px">文字样式</span>
<span class="t" style="left:1638px;top:600px">字体</span>
<div class="inp" style="left:1738px;top:596px;width:102px;height:24px;background:#222326"></div>
<span class="t" style="left:1746px;top:600px">sans-serif</span>
<svg class="ic" style="left:1820px;top:606px;stroke:#888" width="10" height="6"><path d="M0 0L5 5L10 0"/></svg>
<div class="inp" style="left:1845px;top:596px;width:50px;height:24px;background:#222326"></div>
<span class="t b" style="left:1852px;top:601px;color:#ddd">20</span><span class="t px" style="left:1877px;top:600px">px</span>
<div class="inp" style="left:1738px;top:625px;width:40px;height:24px;border-radius:4px;background:#222326"></div>
<div class="a" style="left:1744px;top:630px;width:15px;height:15px;background:#ffff00"></div>
<svg class="ic" style="left:1762px;top:636px" width="9" height="5"><path d="M0 0H9L4.5 5Z" fill="#ccc" stroke="none"/></svg>
<span class="t" style="left:1790px;top:628px;font-size:15px;line-height:18px;height:18px;color:#aaa">B</span>
<span class="t" style="left:1822px;top:628px;font:italic 15px/18px 'Liberation Serif',serif;height:18px;color:#aaa">I</span>
<span class="t" style="left:1849px;top:628px;font-size:15px;line-height:18px;height:18px;color:#aaa">U</span>
<div class="a" style="left:1849px;top:646px;width:11px;height:1px;background:#aaa"></div>
<span class="t" style="left:1878px;top:628px;font-size:15px;line-height:18px;height:18px;color:#aaa">S</span>
<div class="a" style="left:1876px;top:637px;width:14px;height:1px;background:#aaa"></div>
<span class="t" style="left:1638px;top:663px">水平对齐方式</span>
<svg class="ic" style="left:1750px;top:665px;stroke:#bbb" width="12" height="12"><path d="M0 1H12M0 4H8M0 7H12M0 10H8"/></svg>
<div class="a" style="left:1778px;top:660px;width:25px;height:23px;background:#4a4a4c;border-radius:2px"></div>
<svg class="ic" style="left:1785px;top:665px;stroke:#ddd" width="12" height="12"><path d="M0 1H12M2 4H10M0 7H12M2 10H10"/></svg>
<svg class="ic" style="left:1820px;top:665px;stroke:#bbb" width="12" height="12"><path d="M0 1H12M4 4H12M0 7H12M4 10H12"/></svg>
<span class="t" style="left:1638px;top:697px">文字偏移</span>
<div class="inp" style="left:1738px;top:693px;width:77px;height:24px;background:#222326"><div class="lbl" style="width:17px">X</div></div>
<div class="inp" style="left:1818px;top:693px;width:77px;height:24px;background:#222326"><div class="lbl" style="width:17px">Y</div></div>
<span class="t b" style="left:1761px;top:698px;color:#ddd">0</span><span class="t px" style="left:1798px;top:698px">px</span>
<span class="t b" style="left:1840px;top:698px;color:#ddd">0</span><span class="t px" style="left:1878px;top:698px">px</span>
<div class="a" style="left:1632.5px;top:561px;width:276px;height:162px;border:2px solid #e8151f"></div>
<div class="box" style="left:1632px;top:728px;width:274px;height:34px;background:#222326"></div>
<svg class="ic" style="left:1639px;top:741px" width="5" height="8"><path d="M0 0L4 4L0 8"/></svg><span class="t" style="left:1651px;top:737px">边界样式</span>
<div class="box" style="left:1632px;top:767px;width:274px;height:34px;background:#222326"></div>
<svg class="ic" style="left:1639px;top:780px" width="5" height="8"><path d="M0 0L4 4L0 8"/></svg><span class="t" style="left:1651px;top:776px">背景样式</span>
<div class="box" style="left:1632px;top:806px;width:274px;height:34px;background:#222326"></div>
<svg class="ic" style="left:1639px;top:819px" width="5" height="8"><path d="M0 0L4 4L0 8"/></svg><span class="t" style="left:1651px;top:815px">小地图</span>

<div class="sec" style="top:851px;height:36px"></div>
<svg class="ic" style="left:1634px;top:865px" width="5" height="8"><path d="M0 0V8L5 4Z" fill="#bbb" stroke="none"/></svg>
<span class="t b" style="left:1649px;top:861px">数据样式</span>
<svg class="a" style="left:1899px;top:861px" width="4" height="16"><circle cx="2" cy="2" r="1.5" fill="#ccc"/><circle cx="2" cy="7.5" r="1.5" fill="#ccc"/><circle cx="2" cy="13" r="1.5" fill="#ccc"/></svg>
<div class="sec" style="top:888px;height:36px"></div>
<svg class="ic" style="left:1634px;top:902px" width="5" height="8"><path d="M0 0V8L5 4Z" fill="#bbb" stroke="none"/></svg>
<span class="t b" style="left:1649px;top:898px">面板设置</span>
<svg class="a" style="left:1899px;top:898px" width="4" height="16"><circle cx="2" cy="2" r="1.5" fill="#ccc"/><circle cx="2" cy="7.5" r="1.5" fill="#ccc"/><circle cx="2" cy="13" r="1.5" fill="#ccc"/></svg>

<!-- status -->
<div class="a" style="left:1619px;top:1000px;width:301px;height:1px;background:#1f2023"></div>
<span class="t b" style="left:1622px;top:1002px;color:#dcdcdc;font-size:11px">内存：200 / 3887 / 4096 MB &nbsp;25 / 225 MB</span>
<span class="t b" style="right:4px;top:1002px;color:#dcdcdc;font-size:11px">FPS: &nbsp;62</span>
<span class="t b" style="left:1622px;top:1023px;color:#dcdcdc;font-size:11px">组件数: 1 / 1 &nbsp; 子组件数: 45</span>
<span class="t b" style="right:4px;top:1023px;color:#dcdcdc;font-size:11px">4.3.2-rc.2</span>

<!-- arrow -->
<svg class="a" style="left:0;top:0;pointer-events:none" width="1920" height="1040">
<line x1="1626" y1="598" x2="1200" y2="694" stroke="#e8202a" stroke-width="3.5"/>
<polygon points="1189,696 1204,687 1206,700" fill="#e8202a"/>
</svg>
</body></html>
